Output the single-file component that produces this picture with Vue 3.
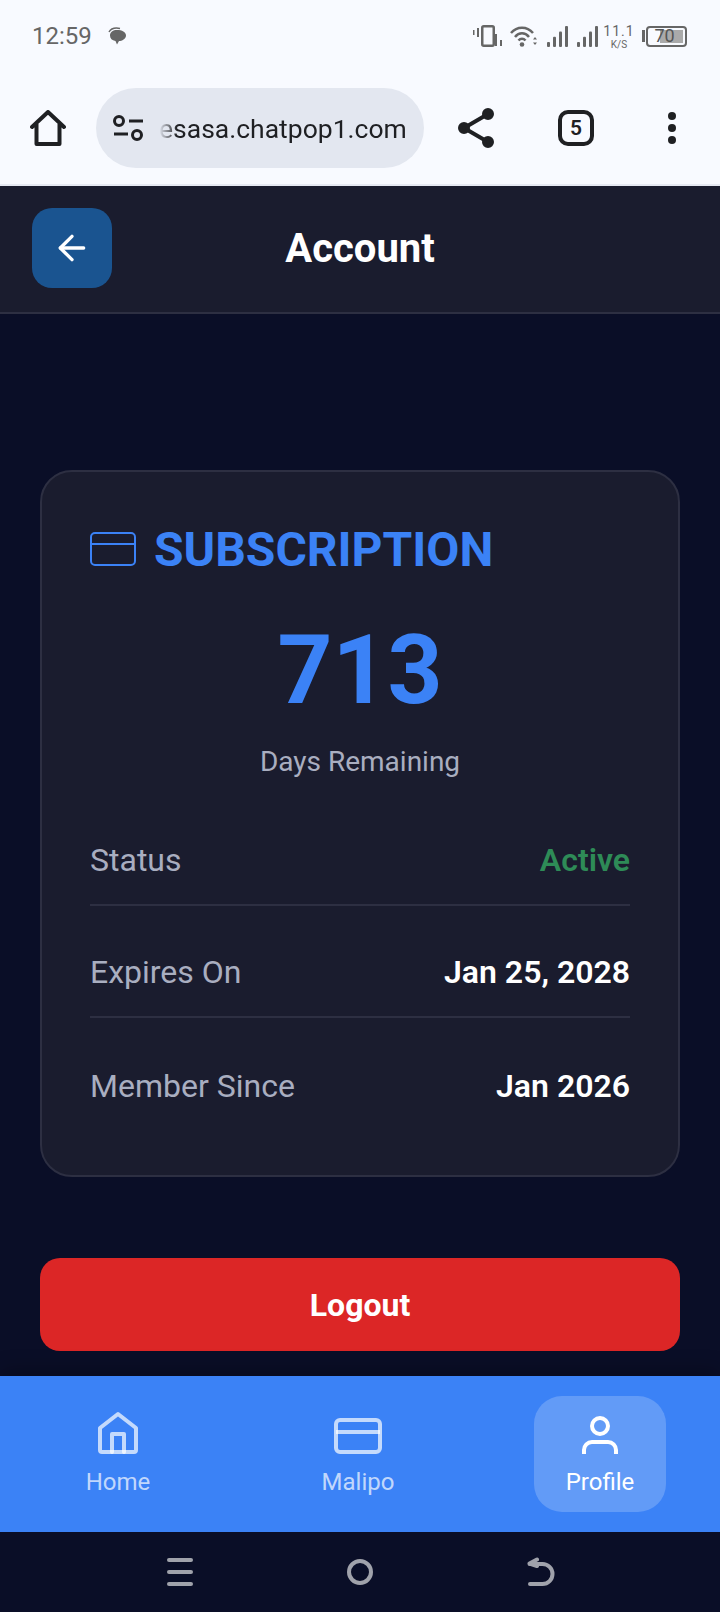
<script setup>
const rows = [
  { label: 'Status', value: 'Active', cls: 'active' },
  { label: 'Expires On', value: 'Jan 25, 2028', cls: '' },
  { label: 'Member Since', value: 'Jan 2026', cls: '' }
]
const signalBars = [0, 6, 12, 18]
</script>

<template>
  <div class="phone">
    <div class="status-bar">
      <span class="time">12:59</span>
      <svg class="bubble" width="18" height="18" viewBox="0 0 18 18" fill="#666">
        <path d="M1 5 C3 1.500 7 0.500 12 1.500" fill="none" stroke="#666" stroke-width="1.500" />
        <path d="M9 3 C14 3 18 5 18 8.500 C18 12 14 14 11 14 L9 17.500 L7.500 14 C4 13.500 2 11.500 2 8.500 C2 5 5 3 9 3 Z" />
      </svg>
      <div class="status-right">
        <svg width="29" height="22" viewBox="0 0 29 22" fill="#666">
          <rect x="0" y="5" width="1.500" height="5" />
          <rect x="4" y="3" width="2" height="9" />
          <rect x="9.250" y="1.250" width="11.500" height="19.500" rx="1.500" fill="none" stroke="#666" stroke-width="2.500" />
          <rect x="22" y="9" width="2" height="12" />
          <rect x="27" y="15" width="2" height="6" />
        </svg>
        <svg class="wifi" width="28" height="22" viewBox="0 0 28 22" fill="none" stroke="#666" stroke-width="2.500">
          <path d="M1 8 C7 1 17 1 23 8" />
          <path d="M5 12 C9 7 15 7 19 12" />
          <path d="M8.500 15.500 C10.500 13 13.500 13 15.500 15.500" />
          <circle cx="12" cy="19.500" r="2.300" fill="#666" stroke="none" />
          <path d="M25 12 l2 2.500 h-4 z M25 20 l2 -2.500 h-4 z" fill="#666" stroke="none" />
        </svg>
        <svg v-for="n in 2" :key="n" class="signal" width="21" height="22" viewBox="0 0 21 22" fill="#666">
          <rect v-for="(x, i) in signalBars" :key="x" :x="x" :y="22 - (5 + i * 5.300)" width="3" :height="5 + i * 5.300" rx="1" />
        </svg>
        <div class="speed">
          <span class="speed-num">11.1</span>
          <span class="speed-unit">K/S</span>
        </div>
        <div class="battery">
          <span class="battery-nub"></span>
          <div class="battery-body">
            <span class="battery-fill"></span>
            <span class="battery-num">70</span>
          </div>
        </div>
      </div>
    </div>

    <div class="toolbar">
      <svg class="tool-home" width="36" height="36" viewBox="0 0 36 36" fill="none" stroke="#1f2023" stroke-width="4" stroke-linejoin="round">
        <path d="M2 17 L18 2 L34 17 M6.500 14 V34 H29.500 V14" stroke-linecap="round" />
      </svg>
      <div class="url-pill">
        <svg width="30" height="26" viewBox="0 0 30 26" fill="none" stroke="#1f2023" stroke-width="3">
          <circle cx="6" cy="6" r="4.500" />
          <path d="M16 6 H30 M1 19 H15" />
          <circle cx="24" cy="20" r="4.500" />
        </svg>
        <span class="url">esasa.chatpop1.com</span>
      </div>
      <svg class="tool-share" width="36" height="40" viewBox="0 0 36 40" fill="#1f2023" stroke="#1f2023" stroke-width="4">
        <path d="M6 20 L30 6 M6 20 L30 34" fill="none" />
        <circle cx="6" cy="20" r="4" />
        <circle cx="30" cy="6" r="4" />
        <circle cx="30" cy="34" r="4" />
      </svg>
      <div class="tabs">5</div>
      <div class="dots">
        <span></span>
        <span></span>
        <span></span>
      </div>
    </div>

    <header class="app-header">
      <button class="back-btn">
        <svg width="40" height="40" viewBox="0 0 24 24" fill="none" stroke="#fff" stroke-width="2" stroke-linecap="round" stroke-linejoin="round">
          <path d="M19 12H5" />
          <path d="M12 19l-7-7 7-7" />
        </svg>
      </button>
      <h1 class="title">Account</h1>
    </header>

    <main class="content">
      <section class="card">
        <div class="card-head">
          <svg width="46" height="34" viewBox="0 0 46 34" fill="none" stroke="#3b82f6" stroke-width="2">
            <rect x="1" y="1" width="44" height="32" rx="4" />
            <path d="M1 12 H45" />
          </svg>
          <h2>SUBSCRIPTION</h2>
        </div>
        <div class="days">713</div>
        <div class="days-label">Days Remaining</div>
        <div class="rows">
          <div v-for="row in rows" :key="row.label" class="row">
            <span class="row-label">{{ row.label }}</span>
            <span :class="['row-value', row.cls]">{{ row.value }}</span>
          </div>
        </div>
      </section>
      <button class="logout">Logout</button>
    </main>

    <nav class="bottom-nav">
      <div class="nav-item">
        <svg width="48" height="48" viewBox="0 0 24 24" fill="none" stroke="currentColor" stroke-width="2" stroke-linecap="round" stroke-linejoin="round">
          <path d="M3 9l9-7 9 7v11a1 1 0 0 1-1 1H4a1 1 0 0 1-1-1z" />
          <path d="M9 21V12h6v9" />
        </svg>
        <span>Home</span>
      </div>
      <div class="nav-item">
        <svg width="48" height="48" viewBox="0 0 24 24" fill="none" stroke="currentColor" stroke-width="2">
          <rect x="1" y="5" width="22" height="16" rx="2" />
          <path d="M1 11h22" />
        </svg>
        <span>Malipo</span>
      </div>
      <div class="nav-item current">
        <svg width="48" height="48" viewBox="0 0 24 24" fill="none" stroke="currentColor" stroke-width="2">
          <circle cx="12" cy="8" r="4" />
          <path d="M4 22v-2a4 4 0 0 1 4-4h8a4 4 0 0 1 4 4v2" />
        </svg>
        <span>Profile</span>
      </div>
    </nav>

    <div class="system-bar">
      <div class="sys-menu">
        <span></span>
        <span></span>
        <span></span>
      </div>
      <span class="sys-home"></span>
      <svg width="30" height="30" viewBox="0 0 30 30" fill="none" stroke="#a0a2ab" stroke-width="4" stroke-linecap="round" stroke-linejoin="round">
        <path d="M11 2.500 L3.500 6.500 L11 9 M3.500 7 H16.500 A10 10 0 0 1 16.500 27 H4" />
      </svg>
    </div>
  </div>
</template>

<style scoped>
.phone {
  width: 720px;
  height: 1612px;
  display: flex;
  flex-direction: column;
  font-family: Roboto, "Noto Sans", sans-serif;
  background: #0a0e27;
  overflow: hidden;
}
.status-bar {
  height: 72px;
  display: flex;
  align-items: center;
  padding: 0 33px 0 32px;
  background: #f8faff;
  color: #666;
}
.time {
  font-size: 24px;
}
.bubble {
  margin-left: 16px;
}
.status-right {
  margin-left: auto;
  display: flex;
  align-items: center;
}
.wifi {
  margin-left: 8px;
}
.signal {
  margin-left: 9px;
}
.signal:first-of-type {
  margin-left: 10px;
}
.speed {
  margin-left: 8px;
  width: 26px;
  display: flex;
  flex-direction: column;
  align-items: center;
  gap: 1px;
  margin-top: 3px;
}
.speed-num {
  font-size: 14px;
  line-height: 14px;
  letter-spacing: 1px;
}
.speed-unit {
  font-size: 10px;
  line-height: 12px;
}
.battery {
  margin-left: 10px;
  display: flex;
  align-items: center;
}
.battery-nub {
  width: 3px;
  height: 12px;
  background: #666;
  margin-right: 1px;
}
.battery-body {
  position: relative;
  width: 41px;
  height: 21px;
  border: 2px solid #666;
  border-radius: 4px;
  box-sizing: border-box;
  display: flex;
  align-items: center;
  justify-content: center;
  padding-right: 4px;
}
.battery-fill {
  position: absolute;
  top: 2px;
  right: 2px;
  bottom: 2px;
  width: 23px;
  background: #aaa;
}
.battery-num {
  position: relative;
  font-size: 18px;
  line-height: 1;
  color: #555;
}
.toolbar {
  height: 112px;
  display: flex;
  align-items: center;
  padding: 0 0 0 30px;
  background: #f8faff;
  border-bottom: 2px solid #e6e9f2;
  box-sizing: content-box;
}
.tool-home {
  margin-right: 30px;
}
.url-pill {
  width: 328px;
  height: 80px;
  border-radius: 40px;
  background: #e3e7f0;
  display: flex;
  align-items: center;
  padding-left: 17px;
  box-sizing: border-box;
}
.url {
  margin-left: 16px;
  font-size: 26.500px;
  color: #1f2023;
  white-space: nowrap;
  -webkit-mask-image: linear-gradient(to right, transparent 0, #000 18px);
  mask-image: linear-gradient(to right, transparent 0, #000 18px);
}
.tool-share {
  margin-left: 34px;
}
.tabs {
  margin-left: 64px;
  width: 36px;
  height: 36px;
  box-sizing: border-box;
  border: 4px solid #1f2023;
  border-radius: 10px;
  display: flex;
  align-items: center;
  justify-content: center;
  font-size: 21px;
  font-weight: 600;
  color: #1f2023;
}
.dots {
  margin-left: 74px;
  display: flex;
  flex-direction: column;
  gap: 4px;
}
.dots span {
  width: 8px;
  height: 8px;
  border-radius: 50%;
  background: #1f2023;
}
.app-header {
  height: 124px;
  flex: none;
  display: flex;
  align-items: center;
  padding: 0 32px 2px;
  background: #1a1c2e;
  border-bottom: 2px solid #2d2f42;
  box-sizing: content-box;
  width: 656px;
}
.back-btn {
  width: 80px;
  height: 80px;
  border: none;
  padding: 0;
  border-radius: 20px;
  background: #1a5490;
  display: flex;
  align-items: center;
  justify-content: center;
}
.title {
  flex: 1;
  margin: 0 80px 0 0;
  text-align: center;
  font-size: 40px;
  font-weight: 700;
  color: #fff;
}
.content {
  flex: 1;
  padding: 156px 40px 0;
}
.card {
  height: 707px;
  box-sizing: border-box;
  padding: 52px 48px 0;
  background: #1a1c2e;
  border: 2px solid #2d2f42;
  border-radius: 32px;
}
.card-head {
  display: flex;
  align-items: center;
  gap: 18px;
  height: 50px;
}
.card-head h2 {
  margin: 0;
  font-size: 48px;
  font-weight: 700;
  color: #3b82f6;
}
.days {
  margin-top: 40px;
  text-align: center;
  font-size: 96px;
  font-weight: 700;
  line-height: 112px;
  color: #3b82f6;
}
.days-label {
  margin-top: 19px;
  text-align: center;
  font-size: 28px;
  line-height: 34px;
  color: #a9aec0;
}
.rows {
  margin-top: 15px;
}
.row {
  display: flex;
  justify-content: space-between;
  align-items: flex-end;
  height: 112px;
  box-sizing: border-box;
  padding-bottom: 25px;
  border-bottom: 2px solid #2d2f42;
}
.row:last-child {
  border-bottom: none;
}
.row-label {
  font-size: 32px;
  color: #a9aec0;
}
.row-value {
  font-size: 32px;
  font-weight: 600;
  color: #fff;
}
.row-value.active {
  color: #2e8b57;
}
.logout {
  display: block;
  width: 100%;
  height: 93px;
  margin-top: 81px;
  border: none;
  border-radius: 20px;
  background: #dc2626;
  color: #fff;
  font-family: inherit;
  font-size: 32px;
  font-weight: 700;
}
.bottom-nav {
  height: 156px;
  flex: none;
  display: flex;
  justify-content: space-around;
  align-items: center;
  background: #3b82f6;
  box-shadow: 0 -4px 20px rgba(0, 0, 0, 0.3);
}
.nav-item {
  height: 116px;
  box-sizing: border-box;
  padding: 14px 32px 0;
  border-radius: 28px;
  display: flex;
  flex-direction: column;
  align-items: center;
  color: rgba(255, 255, 255, 0.7);
  font-size: 24px;
}
.nav-item span {
  margin-top: 10px;
  line-height: 28px;
}
.nav-item.current {
  background: rgba(255, 255, 255, 0.2);
  color: #fff;
}
.system-bar {
  height: 80px;
  flex: none;
  display: flex;
  align-items: center;
  background: #0a0e27;
  padding: 0 164px 0 167px;
  justify-content: space-between;
}
.sys-menu {
  display: flex;
  flex-direction: column;
  gap: 8px;
}
.sys-menu span {
  width: 26px;
  height: 4px;
  border-radius: 2px;
  background: #a0a2ab;
}
.sys-home {
  width: 26px;
  height: 26px;
  box-sizing: border-box;
  border: 4px solid #a0a2ab;
  border-radius: 50%;
}
</style>

<style>
body {
  background: #0a0e27;
}
</style>
